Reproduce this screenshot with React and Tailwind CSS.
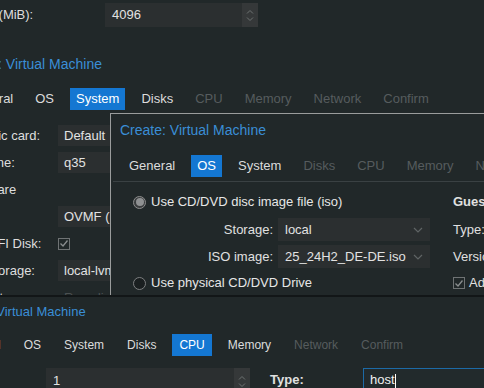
import React from "react";

const BG = "bg-[#212829]";

function Spinner() {
  return (
    <div className="ml-auto h-full w-[16px] shrink-0 bg-[#353839] flex flex-col items-center justify-center gap-[3px]">
      <svg width="8" height="5" viewBox="0 0 8 5" fill="none">
        <path d="M1 4.5L4 1.5L7 4.5" stroke="#6e7273" strokeWidth="1" />
      </svg>
      <svg width="8" height="5" viewBox="0 0 8 5" fill="none">
        <path d="M1 0.5L4 3.5L7 0.5" stroke="#6e7273" strokeWidth="1" />
      </svg>
    </div>
  );
}

function Chevron() {
  return (
    <svg width="10" height="6" viewBox="0 0 10 6" fill="none" className="ml-auto mr-[7px] shrink-0">
      <path d="M1 1L5 5L9 1" stroke="#5f6465" strokeWidth="1.2" />
    </svg>
  );
}

function Tabs({ items, active, disabledFrom, gap = "gap-[10px]", pad = "px-[6px]", size = "", ml = "" }) {
  return (
    <div className={`flex ${gap} h-[22px] ${ml} ${size}`}>
      {items.map((t, i) => (
        <div
          key={t}
          className={`${pad} h-[22px] leading-[22px] whitespace-nowrap shrink-0 ${
            i === active
              ? "bg-[#1477d2] text-white"
              : i >= disabledFrom
              ? "text-[#565c5e]"
              : "text-[#dcdcdc]"
          }`}
        >
          {t}
        </div>
      ))}
    </div>
  );
}

function Field({ label, children }) {
  return (
    <div className="flex items-center h-[21px]">
      <div className="w-[96px] shrink-0 text-[#dedede] whitespace-nowrap">{label}</div>
      {children}
    </div>
  );
}

function Radio({ checked }) {
  return (
    <div
      className={`w-[13px] h-[13px] shrink-0 rounded-full border flex items-center justify-center ${
        checked ? "border-[#8d8d8d] bg-[#3a3d3e]" : "border-[#7d7f80] bg-[#1a1f20]"
      }`}
    >
      {checked && <div className="w-[8px] h-[8px] rounded-full bg-[#8f9192]" />}
    </div>
  );
}

function CheckBox() {
  return (
    <div className="w-[12px] h-[12px] shrink-0 border border-[#6f7374] flex items-center justify-center">
      <svg width="10" height="9" viewBox="0 0 10 9" fill="none">
        <path d="M1.5 4.5L4 7L8.5 1.5" stroke="#8a8e8f" strokeWidth="1.3" />
      </svg>
    </div>
  );
}

const TABS = ["General", "OS", "System", "Disks", "CPU", "Memory", "Network", "Confirm"];

export default function App() {
  return (
    <div className={`relative w-[484px] h-[388px] overflow-hidden ${BG} font-['Liberation_Sans',Arial,sans-serif] text-[13px]`}>
      {/* back window: System tab */}
      <div className="absolute left-0 top-0 w-[484px] h-[388px] flex flex-col">
        <div className="mt-[3px] ml-[-52px] flex items-center h-[24px]">
          <div className="w-[157px] shrink-0 text-[#dedede]">Memory (MiB):</div>
          <div className="w-[153px] h-[24px] shrink-0 bg-[#2b2f30] flex items-center pl-[7px] text-[#e2e2e2]">
            4096
            <Spinner />
          </div>
        </div>
        <div className="mt-[28px] ml-[-44px] h-[18px] leading-[18px] text-[14px] text-[#3a8ed6] whitespace-nowrap">
          Create: Virtual Machine
        </div>
        <div className="mt-[15px]">
          <Tabs items={TABS} active={2} disabledFrom={4} ml="ml-[-39px]" />
        </div>
        <div className="mt-[15px] ml-[-38px] flex flex-col gap-[6px]">
          <Field label="Graphic card:">
            <div className="w-[120px] h-[21px] bg-[#2b2f30] pl-[6px] leading-[21px] text-[#e2e2e2]">Default</div>
          </Field>
          <Field label="Machine:">
            <div className="w-[120px] h-[21px] bg-[#2b2f30] pl-[6px] leading-[21px] text-[#e2e2e2]">q35</div>
          </Field>
          <div className="h-[21px] leading-[21px] text-[#dedede]">Firmware</div>
          <Field label="BIOS:">
            <div className="w-[120px] h-[21px] bg-[#2b2f30] pl-[6px] leading-[21px] text-[#e2e2e2]">OVMF (UEFI)</div>
          </Field>
          <Field label="Add EFI Disk:">
            <CheckBox />
          </Field>
          <Field label="EFI Storage:">
            <div className="w-[120px] h-[21px] bg-[#2b2f30] pl-[6px] leading-[21px] text-[#e2e2e2]">local-lvm</div>
          </Field>
          <Field label="Format:">
            <div className="w-[120px] h-[21px] pl-[6px] leading-[21px] text-[#4b5051]">Raw disk image</div>
          </Field>
        </div>
      </div>

      {/* middle window: OS tab */}
      <div className={`absolute left-[110px] top-[113px] w-[400px] h-[184px] border border-[#9a9c9c] ${BG} flex flex-col`}>
        <div className="mt-[7px] pl-[9px] h-[18px] leading-[18px] text-[14px] text-[#3a8ed6] whitespace-nowrap">
          Create: Virtual Machine
        </div>
        <div className="mt-[16px] pl-[12px]">
          <Tabs items={TABS} active={1} disabledFrom={3} />
        </div>
        <div className="mt-[4px] ml-[2px] h-px bg-[#3a4143]" />
        <div className="mt-[11px] flex">
          <div className="w-[330px] shrink-0 flex flex-col">
            <div className="flex items-center gap-[5px] h-[18px] pl-[22px] text-[#e6e6e6] whitespace-nowrap">
              <Radio checked />
              Use CD/DVD disc image file (iso)
            </div>
            <div className="mt-[7px] flex items-center h-[23px]">
              <div className="w-[167px] shrink-0 pr-[5px] text-right text-[#e0e0e0]">Storage:</div>
              <div className="w-[152px] h-[23px] shrink-0 bg-[#2b2f30] flex items-center pl-[7px] text-[#e2e2e2]">
                local
                <Chevron />
              </div>
            </div>
            <div className="mt-[4px] flex items-center h-[23px]">
              <div className="w-[167px] shrink-0 pr-[5px] text-right text-[#e0e0e0]">ISO image:</div>
              <div className="w-[152px] h-[23px] shrink-0 bg-[#2b2f30] flex items-center pl-[7px] text-[#e2e2e2] whitespace-nowrap">
                25_24H2_DE-DE.iso
                <Chevron />
              </div>
            </div>
            <div className="mt-[6px] flex items-center gap-[5px] h-[18px] pl-[22px] text-[#e6e6e6] whitespace-nowrap">
              <Radio />
              Use physical CD/DVD Drive
            </div>
          </div>
          <div className="ml-[12px] shrink-0 flex flex-col text-[#e0e0e0] whitespace-nowrap">
            <div className="h-[18px] leading-[18px] font-bold">Guest OS:</div>
            <div className="mt-[7px] h-[23px] leading-[23px]">Type:</div>
            <div className="mt-[4px] h-[23px] leading-[23px]">Version:</div>
            <div className="mt-[6px] h-[18px] flex items-center gap-[4px]">
              <CheckBox />
              Add additional drive
            </div>
          </div>
        </div>
      </div>

      {/* front window: CPU tab */}
      <div className={`absolute left-0 top-[295px] w-[484px] h-[93px] border-t-2 border-[#121617] ${BG} flex flex-col`}>
        <div className="mt-[6px] ml-[-50px] h-[18px] leading-[18px] text-[13px] text-[#3a8ed6] whitespace-nowrap">
          Create: Virtual Machine
        </div>
        <div className="mt-[13px]">
          <Tabs
            items={TABS}
            active={4}
            disabledFrom={6}
            gap="gap-[9px]"
            pad="px-[7px]"
            size="text-[12px]"
            ml="ml-[-49px]"
          />
        </div>
        <div className="mt-[4px] h-px bg-[#3a4143]" />
        <div className="mt-[8px] flex items-start">
          <div className="ml-[46px] w-[204px] h-[26px] shrink-0 bg-[#2b2f30] flex items-center pl-[7px] text-[#e2e2e2]">
            1
            <Spinner />
          </div>
          <div className="ml-[20px] w-[93px] h-[26px] shrink-0 leading-[24px] text-[#e0e0e0] font-bold">Type:</div>
          <div className="w-[130px] h-[26px] shrink-0 bg-[#222a2c] border border-[#1c6aa6] pl-[6px] leading-[22px] text-[#f0f0f0]">
            host<span className="inline-block w-px h-[14px] bg-white align-middle" />
          </div>
        </div>
      </div>
    </div>
  );
}
